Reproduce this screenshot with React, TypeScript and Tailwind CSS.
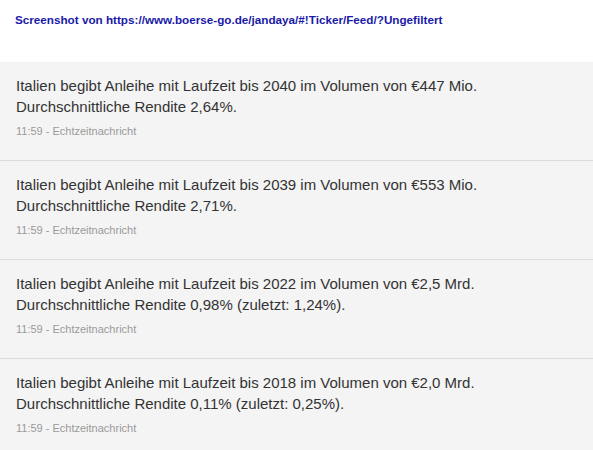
const items = [
  {
    line1: "Italien begibt Anleihe mit Laufzeit bis 2040 im Volumen von €447 Mio.",
    line2: "Durchschnittliche Rendite 2,64%.",
  },
  {
    line1: "Italien begibt Anleihe mit Laufzeit bis 2039 im Volumen von €553 Mio.",
    line2: "Durchschnittliche Rendite 2,71%.",
  },
  {
    line1: "Italien begibt Anleihe mit Laufzeit bis 2022 im Volumen von €2,5 Mrd.",
    line2: "Durchschnittliche Rendite 0,98% (zuletzt: 1,24%).",
  },
  {
    line1: "Italien begibt Anleihe mit Laufzeit bis 2018 im Volumen von €2,0 Mrd.",
    line2: "Durchschnittliche Rendite 0,11% (zuletzt: 0,25%).",
  },
];

export default function App() {
  return (
    <div className="h-[450px] w-[593px] overflow-hidden bg-white font-['Liberation_Sans',Arial,sans-serif]">
      <header className="h-[62px] pl-[15px] pt-[13px]">
        <p className="text-[11.7px] font-bold leading-[14px] text-[#1a1aa8]">
          Screenshot von https://www.boerse-go.de/jandaya/#!Ticker/Feed/?Ungefiltert
        </p>
      </header>
      <div className="bg-[#f4f4f4]">
        {items.map((item, i) => (
          <div key={i} className="h-[99px] border-b border-[#dcdcdc] pl-4 pt-[13px]">
            <p className="text-[15px] leading-[21px] text-[#333]">{item.line1}</p>
            <p className="text-[15px] leading-[21px] text-[#333]">{item.line2}</p>
            <p className="mt-[7px] text-[11px] leading-[14px] text-[#9a9a9a]">11:59 - Echtzeitnachricht</p>
          </div>
        ))}
      </div>
    </div>
  );
}
